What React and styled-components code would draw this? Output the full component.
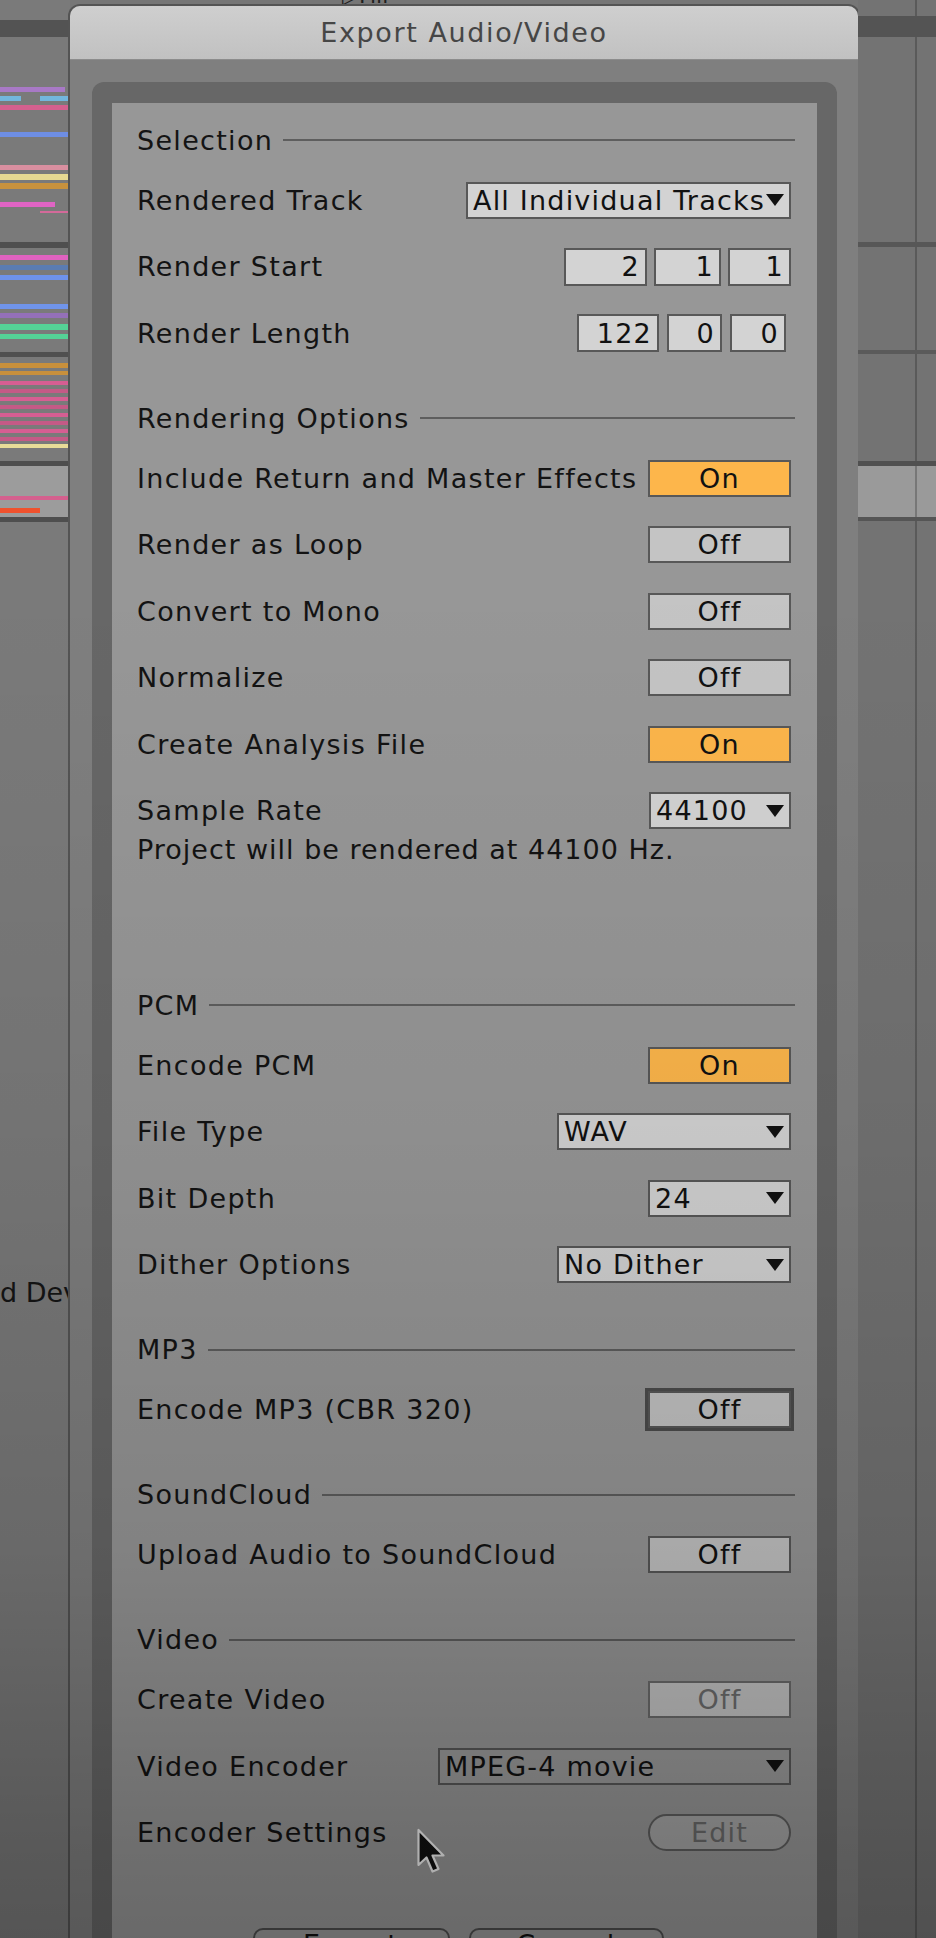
import React from "react";
import styled, { createGlobalStyle } from "styled-components";

const GlobalStyle = createGlobalStyle`
  html, body {
    margin: 0;
    padding: 0;
  }
  body {
    width: 936px;
    height: 1938px;
    overflow: hidden;
    background: #767676;
    font-family: "DejaVu Sans", "Noto Sans", sans-serif;
  }
`;

const Desktop = styled.div`
  position: relative;
  display: grid;
  grid-template-columns: 70px 788px 1fr;
  width: 936px;
  height: 1938px;
  overflow: hidden;
`;

// background arrangement lanes (left and right of the dialog)
const Lane = styled.div`
  display: flex;
  flex-direction: column;
  overflow: hidden;
  background: ${(p) => p.$bg};
  background-image: ${(p) =>
    p.$divider
      ? `linear-gradient(to right, transparent ${p.$divider}px, #5a5a5a ${p.$divider}px, #5a5a5a ${p.$divider + 2}px, transparent ${p.$divider + 2}px)`
      : "none"};
`;

const StripeRow = styled.div`
  display: flex;
  flex: none;
  background: ${(p) => p.$bg || "transparent"};
`;

const Clip = styled.div`
  flex: none;
  height: 100%;
  background: ${(p) => p.$color};
`;

const LaneText = styled.div`
  flex: none;
  height: 36px;
  line-height: 36px;
  font-size: 27px;
  letter-spacing: 0;
  color: #151515;
  white-space: nowrap;
`;

const Center = styled.div`
  display: flex;
  flex-direction: column;
`;

const TopStrip = styled.div`
  flex: none;
  height: 6px;
  overflow: hidden;
  padding-left: 272px;
  font-size: 22px;
  line-height: 22px;
  color: #1e1e1e;
  & > span {
    display: block;
    margin-top: -15px;
  }
`;

const Dialog = styled.div`
  flex: 1;
  display: flex;
  flex-direction: column;
  background: #7f7f7f;
  border-radius: 10px 10px 0 0;
  box-shadow: 0 0 0 2px #545454;
`;

const TitleBar = styled.div`
  flex: none;
  height: 54px;
  display: flex;
  align-items: center;
  justify-content: center;
  background: linear-gradient(#cfcfcf, #c1c1c1);
  border-radius: 10px 10px 0 0;
  border-bottom: 1px solid #8c8c8c;
  box-sizing: border-box;
  font-size: 27px;
  letter-spacing: 1.6px;
  color: #464646;
`;

const Body = styled.div`
  flex: 1;
  display: flex;
  flex-direction: column;
  padding: 22px 21px 0 22px;
`;

const Frame = styled.div`
  flex: 1;
  display: flex;
  flex-direction: column;
  background: #676767;
  border-radius: 12px 12px 0 0;
  padding: 21px 20px 0 20px;
`;

const Panel = styled.div`
  flex: 1;
  background: #979797;
  padding: 10.25px 26px 0 25px;
`;

const SectionHead = styled.div`
  display: flex;
  align-items: center;
  height: 53.5px;
  margin-top: ${(p) => (p.$first ? 0 : 25)}px;
  margin-right: -4px;
  font-size: 27px;
  color: #141414;
  letter-spacing: 1.3px;
  &::after {
    content: "";
    flex: 1;
    height: 2px;
    margin-left: 10px;
    background: #5e5e5e;
  }
`;

const Row = styled.div`
  display: flex;
  align-items: center;
  justify-content: space-between;
  height: 66.5px;
`;

const Label = styled.span`
  font-size: 27px;
  color: #131313;
  letter-spacing: 1.3px;
  white-space: nowrap;
`;

const Info = styled.div`
  margin-top: -4px;
  margin-bottom: 118.5px;
  height: 20px;
  line-height: 20px;
  font-size: 27px;
  color: #131313;
  letter-spacing: 1px;
  white-space: nowrap;
`;

const Control = styled.div`
  box-sizing: border-box;
  display: flex;
  align-items: center;
  height: 37px;
  border: 2px solid #585858;
  font-size: 27px;
  letter-spacing: 1.2px;
  color: #111;
  white-space: nowrap;
`;

const Toggle = styled(Control)`
  width: 143px;
  justify-content: center;
  background: ${(p) => (p.$on ? "#fdb64b" : "#c4c4c4")};
  color: ${(p) => (p.$disabled ? "#6c6c6c" : "#111")};
  border-color: ${(p) => (p.$disabled ? "#6a6a6a" : "#585858")};
  box-shadow: ${(p) => (p.$focus ? "0 0 0 3px #4c4c4c" : "none")};
`;

const PillButton = styled(Control)`
  width: 143px;
  justify-content: center;
  border-radius: 19px;
  background: #a6a6a6;
  border-color: #5e5e5e;
  color: #6a6a6a;
`;

const Dropdown = styled(Control)`
  width: ${(p) => p.$w}px;
  padding: 0 5px 0 5px;
  background: ${(p) => (p.$disabled ? "#9c9c9c" : "#d3d3d3")};
`;

const DropText = styled.span`
  flex: 1;
  overflow: hidden;
`;

const Arrow = styled.span`
  flex: none;
  width: 0;
  height: 0;
  border-left: 9px solid transparent;
  border-right: 9px solid transparent;
  border-top: 12px solid #111;
`;

const NumberGroup = styled.div`
  display: flex;
  gap: ${(p) => p.$gap}px;
  margin-right: ${(p) => p.$inset || 0}px;
`;

const NumberBox = styled(Control)`
  width: ${(p) => p.$w}px;
  height: 38px;
  justify-content: flex-end;
  padding-right: 5px;
  background: #d3d3d3;
`;

const ButtonBar = styled.div`
  display: flex;
  justify-content: center;
  gap: 19px;
  margin-top: 62px;
  margin-left: -12px;
`;

const DialogButton = styled.div`
  box-sizing: border-box;
  width: ${(p) => p.$w}px;
  height: 42px;
  border: 2px solid #4e4e4e;
  border-radius: 10px;
  background: #9a9a9a;
  text-align: center;
  font-size: 27px;
  letter-spacing: 1.3px;
  line-height: 30px;
  color: #111;
`;

const Cursor = styled.svg`
  position: absolute;
  left: 416px;
  top: 1828px;
`;

const Vignette = styled.div`
  position: absolute;
  inset: 0;
  pointer-events: none;
  background: linear-gradient(
    to bottom,
    rgba(0, 0, 0, 0) 0%,
    rgba(0, 0, 0, 0) 30%,
    rgba(0, 0, 0, 0.06) 58%,
    rgba(0, 0, 0, 0.14) 80%,
    rgba(0, 0, 0, 0.27) 95%,
    rgba(0, 0, 0, 0.3) 100%
  );
`;

const leftStripes = [
  { top: 20, h: 17, segs: [[0, 70, "#535353"]] },
  { top: 87, h: 5, segs: [[0, 65, "#a879c6"]] },
  { top: 96, h: 5, segs: [[0, 21, "#72b6dc"], [40, 70, "#72b6dc"]] },
  { top: 105, h: 5, segs: [[0, 70, "#d4608e"]] },
  { top: 132, h: 5, segs: [[0, 70, "#6e8ee4"]] },
  { top: 165, h: 5, segs: [[0, 70, "#d98fa0"]] },
  { top: 174, h: 6, segs: [[0, 70, "#e6d992"]] },
  { top: 183, h: 6, segs: [[0, 70, "#c8923e"]] },
  { top: 202, h: 5, segs: [[0, 55, "#e064c4"]] },
  { top: 211, h: 2, segs: [[40, 70, "#d46a9a"]] },
  { top: 242, h: 6, segs: [[0, 70, "#4f4f4f"]] },
  { top: 255, h: 5, segs: [[0, 70, "#e062c0"]] },
  { top: 265, h: 5, segs: [[0, 70, "#5b7cb2"]] },
  { top: 275, h: 5, segs: [[0, 70, "#6e92ea"]] },
  { top: 304, h: 5, segs: [[0, 70, "#7094ea"]] },
  { top: 313, h: 5, segs: [[0, 70, "#9470b8"]] },
  { top: 324, h: 6, segs: [[0, 70, "#54d296"]] },
  { top: 334, h: 5, segs: [[0, 70, "#54d296"]] },
  { top: 352, h: 5, segs: [[0, 70, "#505050"]] },
  { top: 363, h: 5, segs: [[0, 70, "#c8903c"]] },
  { top: 371, h: 4, segs: [[0, 70, "#c8903c"]] },
  ...[381, 389, 397, 405, 413, 421, 429, 437].map((top, i) => ({
    top,
    h: 4,
    segs: [[0, 70, i % 2 ? "#c45a86" : "#d65e92"]],
  })),
  { top: 444, h: 4, segs: [[0, 70, "#e8dc98"]] },
  { top: 461, h: 5, segs: [[0, 70, "#4e4e4e"]] },
  { top: 466, h: 30, bg: "#9c9c9c", segs: [] },
  { top: 496, h: 4, bg: "#9c9c9c", segs: [[0, 70, "#d4608e"]] },
  { top: 500, h: 8, bg: "#9c9c9c", segs: [] },
  { top: 508, h: 5, bg: "#9c9c9c", segs: [[0, 40, "#f0522e"]] },
  { top: 513, h: 4, bg: "#9c9c9c", segs: [] },
  { top: 517, h: 5, segs: [[0, 70, "#4e4e4e"]] },
];

const rightStripes = [
  { top: 16, h: 21, segs: [[0, 78, "#545454"]] },
  { top: 242, h: 5, segs: [[0, 78, "#575757"]] },
  { top: 350, h: 4, segs: [[0, 78, "#5a5a5a"]] },
  { top: 461, h: 5, segs: [[0, 78, "#505050"]] },
  { top: 466, h: 51, bg: "#9a9a9a", segs: [[57, 59, "#777"]] },
  { top: 517, h: 4, segs: [[0, 78, "#555"]] },
];

function Stripes({ items }) {
  let bottom = 0;
  return items.map((s, i) => {
    const gap = s.top - bottom;
    bottom = s.top + s.h;
    let x = 0;
    return (
      <StripeRow key={i} $bg={s.bg} style={{ marginTop: gap, height: s.h }}>
        {s.segs.map(([x0, x1, color], j) => {
          const ml = x0 - x;
          x = x1;
          return <Clip key={j} $color={color} style={{ marginLeft: ml, width: x1 - x0 }} />;
        })}
      </StripeRow>
    );
  });
}

const Select = ({ w, value, disabled }) => (
  <Dropdown $w={w} $disabled={disabled}>
    <DropText>{value}</DropText>
    <Arrow />
  </Dropdown>
);

export default function App() {
  return (
    <>
      <GlobalStyle />
      <Desktop>
        <Lane $bg="#7a7a7a">
          <Stripes items={leftStripes} />
          <LaneText style={{ marginTop: 753 }}>d Dev</LaneText>
        </Lane>

        <Center>
          <TopStrip>
            <span>▷Fill</span>
          </TopStrip>
          <Dialog>
            <TitleBar>Export Audio/Video</TitleBar>
            <Body>
              <Frame>
                <Panel>
                  <SectionHead $first>Selection</SectionHead>
                  <Row>
                    <Label>Rendered Track</Label>
                    <Select w={325} value="All Individual Tracks" />
                  </Row>
                  <Row>
                    <Label>Render Start</Label>
                    <NumberGroup $gap={7}>
                      <NumberBox $w={83}>2</NumberBox>
                      <NumberBox $w={67}>1</NumberBox>
                      <NumberBox $w={63}>1</NumberBox>
                    </NumberGroup>
                  </Row>
                  <Row>
                    <Label>Render Length</Label>
                    <NumberGroup $gap={8} $inset={5}>
                      <NumberBox $w={82}>122</NumberBox>
                      <NumberBox $w={55}>0</NumberBox>
                      <NumberBox $w={56}>0</NumberBox>
                    </NumberGroup>
                  </Row>

                  <SectionHead>Rendering Options</SectionHead>
                  <Row>
                    <Label>Include Return and Master Effects</Label>
                    <Toggle $on>On</Toggle>
                  </Row>
                  <Row>
                    <Label>Render as Loop</Label>
                    <Toggle>Off</Toggle>
                  </Row>
                  <Row>
                    <Label>Convert to Mono</Label>
                    <Toggle>Off</Toggle>
                  </Row>
                  <Row>
                    <Label>Normalize</Label>
                    <Toggle>Off</Toggle>
                  </Row>
                  <Row>
                    <Label>Create Analysis File</Label>
                    <Toggle $on>On</Toggle>
                  </Row>
                  <Row>
                    <Label>Sample Rate</Label>
                    <Select w={142} value="44100" />
                  </Row>
                  <Info>Project will be rendered at 44100 Hz.</Info>

                  <SectionHead $first>PCM</SectionHead>
                  <Row>
                    <Label>Encode PCM</Label>
                    <Toggle $on>On</Toggle>
                  </Row>
                  <Row>
                    <Label>File Type</Label>
                    <Select w={234} value="WAV" />
                  </Row>
                  <Row>
                    <Label>Bit Depth</Label>
                    <Select w={143} value="24" />
                  </Row>
                  <Row>
                    <Label>Dither Options</Label>
                    <Select w={234} value="No Dither" />
                  </Row>

                  <SectionHead>MP3</SectionHead>
                  <Row>
                    <Label>Encode MP3 (CBR 320)</Label>
                    <Toggle $focus>Off</Toggle>
                  </Row>

                  <SectionHead>SoundCloud</SectionHead>
                  <Row>
                    <Label>Upload Audio to SoundCloud</Label>
                    <Toggle>Off</Toggle>
                  </Row>

                  <SectionHead>Video</SectionHead>
                  <Row>
                    <Label>Create Video</Label>
                    <Toggle $disabled>Off</Toggle>
                  </Row>
                  <Row>
                    <Label>Video Encoder</Label>
                    <Select w={353} value="MPEG-4 movie" disabled />
                  </Row>
                  <Row>
                    <Label>Encoder Settings</Label>
                    <PillButton>Edit</PillButton>
                  </Row>

                  <ButtonBar>
                    <DialogButton $w={197}>Export</DialogButton>
                    <DialogButton $w={195}>Cancel</DialogButton>
                  </ButtonBar>
                </Panel>
              </Frame>
            </Body>
          </Dialog>
        </Center>

        <Lane $bg="#737373" $divider={57}>
          <Stripes items={rightStripes} />
        </Lane>

        <Cursor width="32" height="48" viewBox="0 0 32 48">
          <path
            d="M2.5 2 L2.5 37 L10.5 29.5 L16.5 43.5 L22.5 41 L16.5 27.5 L27.5 27.5 Z"
            fill="#111"
            stroke="#f2f2f2"
            strokeWidth="2.2"
            strokeLinejoin="round"
          />
        </Cursor>
        <Vignette />
      </Desktop>
    </>
  );
}
